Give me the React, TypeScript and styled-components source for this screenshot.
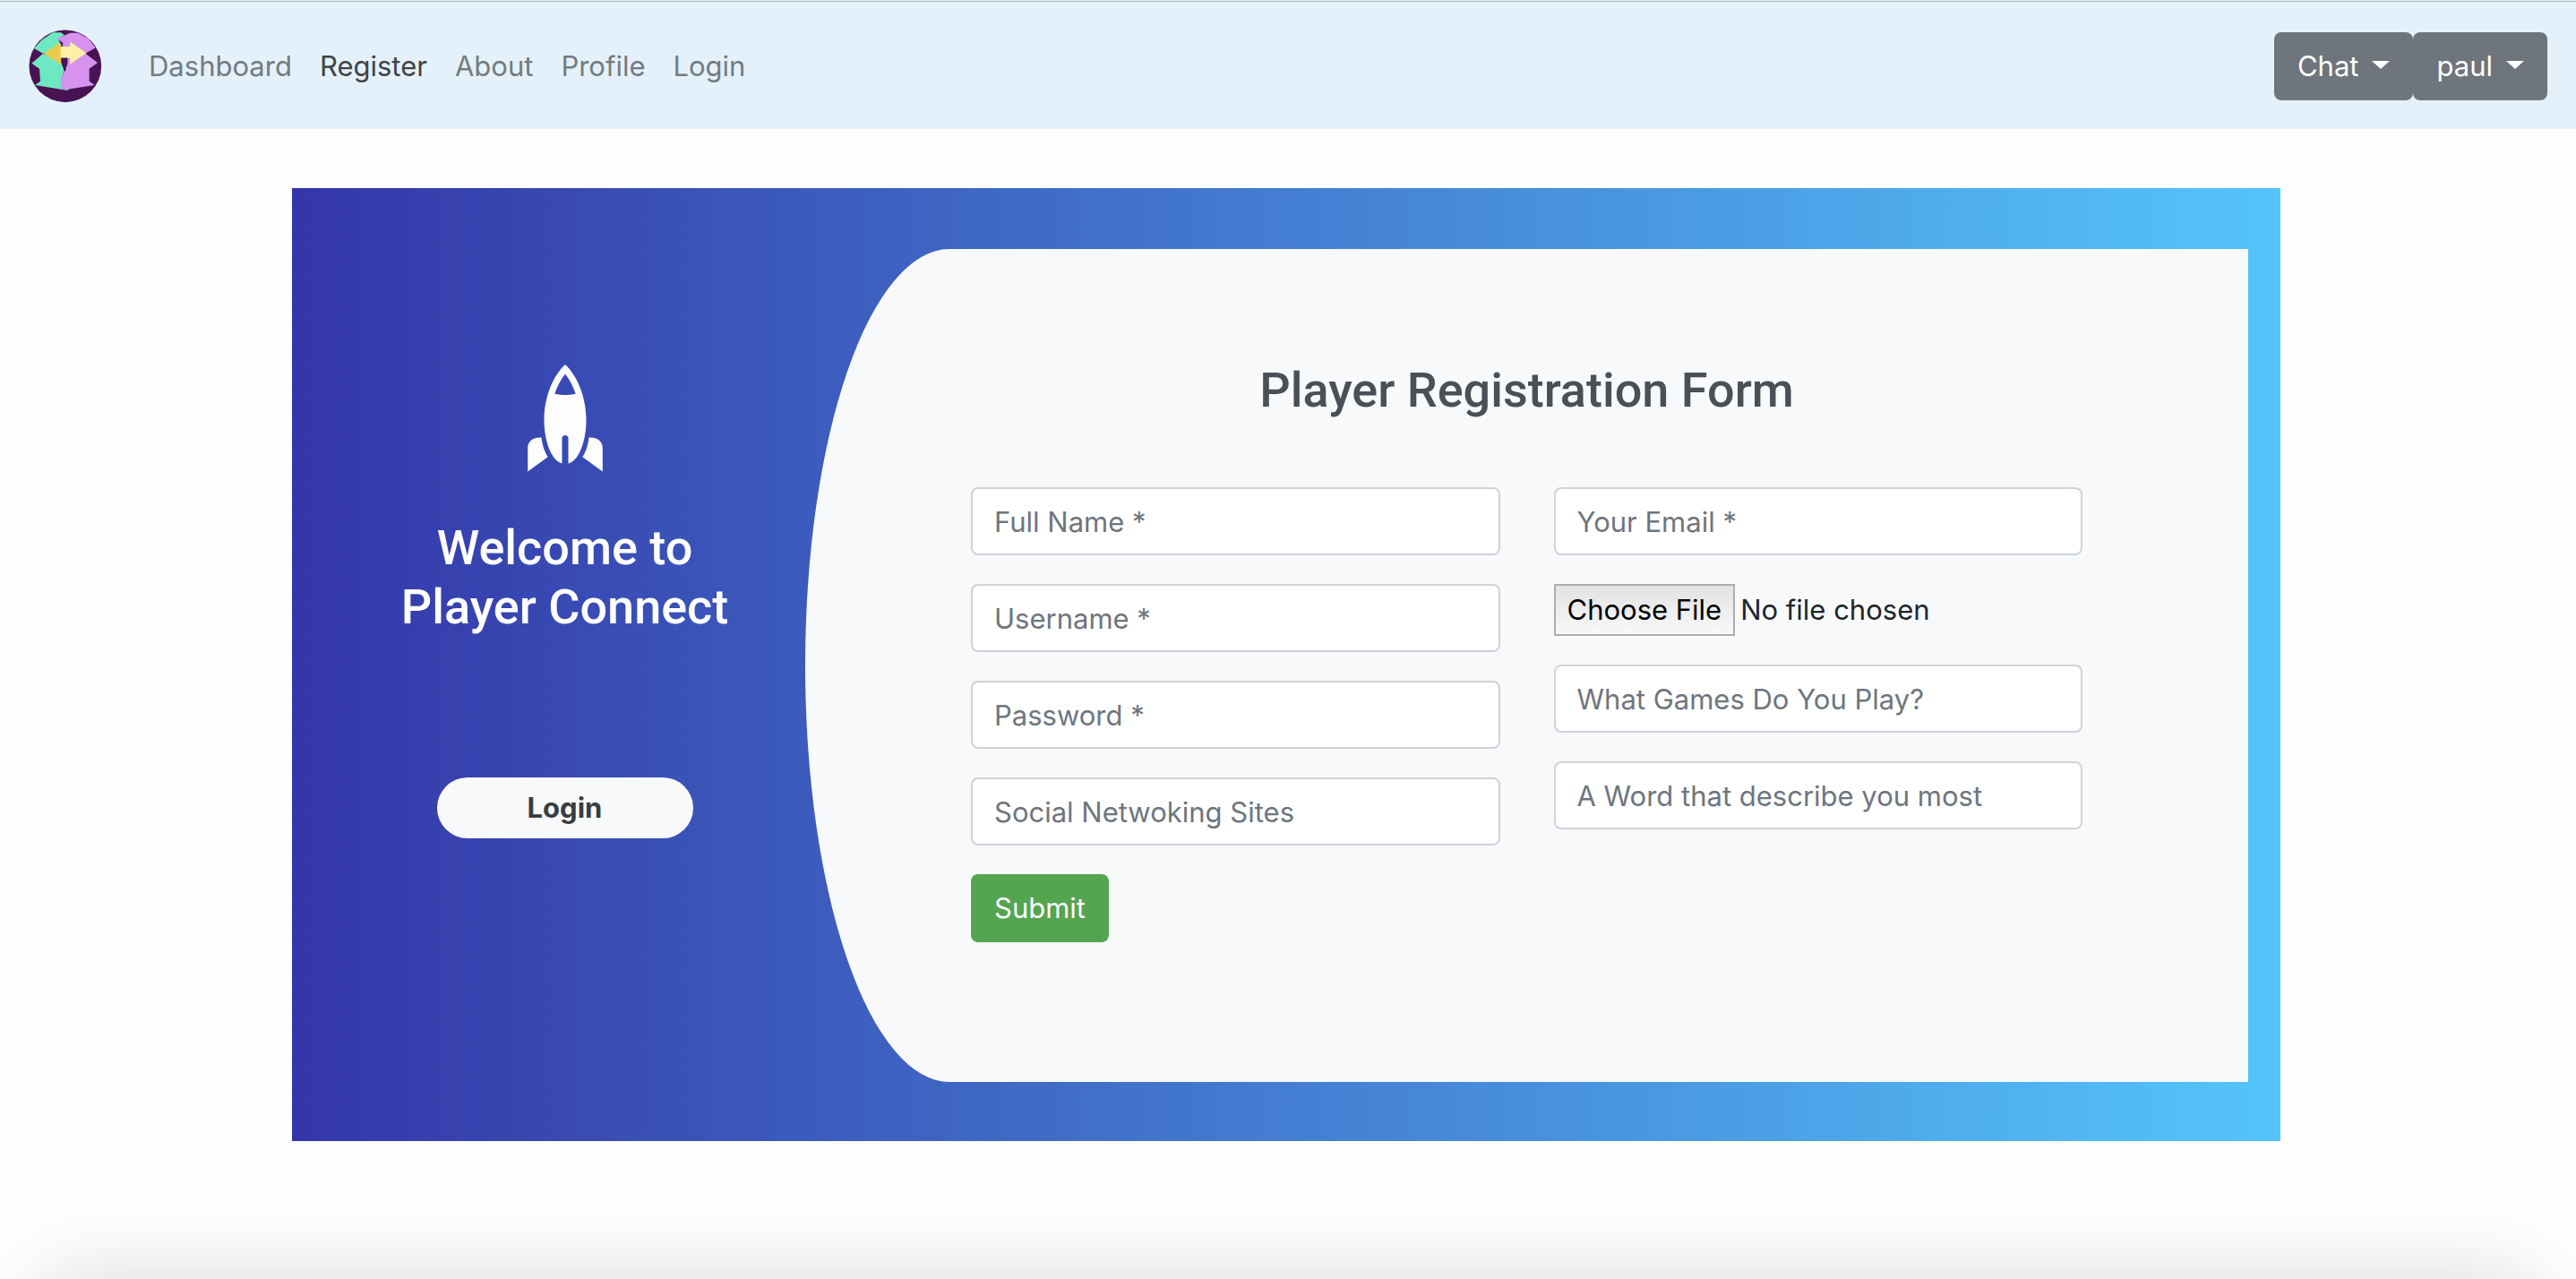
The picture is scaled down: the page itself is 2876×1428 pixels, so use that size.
import React from "react";
import styled, { createGlobalStyle } from "styled-components";

const color = {
  navBg: "#e4f1fb",
  edge: "#acb2b5",
  muted: "#737b81",
  strong: "#404446",
  secondary: "#6e757c",
  panel: "#f8f9fb",
  border: "#cdd3d9",
  placeholder: "#6e757e",
  heading: "#4a5057",
  success: "#55a44f",
};

const GlobalStyle = createGlobalStyle`
  *, *::before, *::after { box-sizing: border-box; }
  body {
    margin: 0;
    background: #fefefe;
    color: #212529;
    font-family: Inter, "Liberation Sans", sans-serif;
    font-size: 31px;
    line-height: 48px;
  }
  button, input { font: inherit; }
`;

const Page = styled.div`
  position: relative;
  display: flex;
  flex-direction: column;
  min-height: 100vh;
  overflow: hidden;
  border-top: 1px solid ${color.navBg};
`;

const Navbar = styled.nav`
  display: flex;
  align-items: center;
  height: 143px;
  padding: 2px 32px 0;
  border-top: 1px solid ${color.edge};
  background: ${color.navBg};
`;

const Brand = styled.a`
  display: flex;
  margin-right: 52px;
`;

const NavList = styled.ul`
  display: flex;
  flex: 1;
  gap: 31px;
  margin: 0;
  padding: 0;
  list-style: none;
`;

const NavLink = styled.a<{ $active?: boolean }>`
  display: block;
  padding: 16px 0;
  color: ${(p) => (p.$active ? color.strong : color.muted)};
  text-decoration: none;
`;

const Button = styled.button<{ $bg: string }>`
  display: inline-flex;
  align-items: center;
  height: 76px;
  padding: 0 26px;
  border: 0;
  border-radius: 8px;
  background: ${(p) => p.$bg};
  color: #fff;
  cursor: pointer;
`;

const Menus = styled.div`
  display: flex;
`;

const Caret = styled.span`
  margin: 0 0 4px 15px;
  border: 10px solid transparent;
  border-top: 9px solid #fff;
  border-bottom: 0;
`;

const Main = styled.main`
  padding: 66px 4px 154px 0;
`;

const Card = styled.section`
  display: grid;
  grid-template-columns: 1fr 3fr;
  max-width: 2220px;
  margin: 0 auto;
  padding: 68px 36px 66px;
  background: linear-gradient(to right, #3436a8, #54c5fb);
`;

const Welcome = styled.div`
  display: flex;
  flex-direction: column;
  align-items: center;
  padding-top: 129px;
`;

const Title = styled.h3<{ $color: string }>`
  margin: 0;
  color: ${(p) => p.$color};
  font-family: Roboto, Inter, sans-serif;
  font-size: 54px;
  font-weight: 500;
  line-height: 66px;
  text-align: center;
`;

const WelcomeTitle = styled(Title)`
  margin: 52px 0 157px;
`;

const LoginButton = styled.button`
  width: 286px;
  height: 68px;
  padding: 0;
  border: 0;
  border-radius: 34px;
  background: ${color.panel};
  color: #383d42;
  font-weight: 700;
  cursor: pointer;
`;

const Panel = styled.form`
  min-height: 930px;
  padding: 125px 185px;
  border-radius: 10% 0 0 10% / 50% 0 0 50%;
  background: ${color.panel};
`;

const Fields = styled.div`
  display: grid;
  grid-template-columns: 1fr 1fr;
  gap: 60px;
  margin-top: 75px;
`;

const Column = styled.div`
  display: flex;
  flex-direction: column;
  align-items: flex-start;
  gap: 32px;
`;

const Label = styled.label`
  display: block;
  width: 100%;
`;

const TextInput = styled.input`
  display: block;
  width: 100%;
  height: 76px;
  padding: 0 24px;
  border: 2px solid ${color.border};
  border-radius: 8px;
  background: #fff;
  color: #495057;
  &::placeholder {
    color: ${color.placeholder};
    opacity: 1;
  }
`;

const FileInput = styled.input`
  display: block;
  width: 100%;
  height: 58px;
  &::file-selector-button {
    height: 58px;
    margin: 0 6px 0 0;
    padding: 0 13px;
    border: 2px solid #adadad;
    border-radius: 0;
    background: linear-gradient(#e2e2e2, #f8f8f8);
    color: #000;
    font: inherit;
  }
`;

const BottomShade = styled.div`
  position: absolute;
  top: 100%;
  left: 50px;
  right: 50px;
  height: 200px;
  box-shadow: 0 0 90px rgba(0, 0, 0, 0.15);
`;

function Logo() {
  return (
    <svg width="82" height="82" viewBox="97 97 246 246" role="img" aria-label="Player Connect">
      <circle cx="219.500" cy="219.500" r="121" fill="#481352" />
      <path d="M115 160L140 132L178 107H205L217 116L195 128L207 150L145 177Z" fill="#6de8c0" />
      <path d="M145 177L205 205L208 210L217 236L205 265V297L118 283L136 270L133 228L107 210Z" fill="#6de8c0" />
      <path d="M192 128L236 108H262L298 128L321 158L287 177L236 155L210 153L212 141Z" fill="#d792ee" />
      <path d="M287 177L328 208L300 228V270L318 283L228 297L205 299V262L219 234L227 210V190Z" fill="#d792ee" />
      <path d="M218 295h12v5h-12z" fill="#6de8c0" />
      <path d="M147 177L200 141L206 153V213L200 211Z" fill="#e8cc50" />
      <path d="M204 154H236V138L290 176L236 213V192H204Z" fill="#fff0a5" />
      <path d="M207 192H227V210L221 226V236H214V228L207 210Z" fill="#481352" />
    </svg>
  );
}

function Rocket() {
  return (
    <svg width="84" height="120" viewBox="0 0 84 120" fill="#fdfdfd" aria-hidden="true">
      <path
        fillRule="evenodd"
        d="M42 0C56 13 65.500 37 65.500 62C65.500 86 57 108 45.500 110.500V82.500a3.500 3.500 0 0 0-7 0V110.500C27 108 18.500 86 18.500 62C18.500 37 28 13 42 0ZM42 10.500C37 17 33 24.500 30.300 32.800Q42 35.200 53.700 32.800C51 24.500 47 17 42 10.500Z"
      />
      <path d="M.2 119.600V93C.2 85 7 80.800 15.500 81.500C16.500 90 18.500 96.500 22.600 103.200Z" />
      <path d="M83.800 119.600V93C83.800 85 77 80.800 68.500 81.500C67.500 90 65.500 96.500 61.400 103.200Z" />
    </svg>
  );
}

function Field({ label, type = "text" }: { label: string; type?: string }) {
  return (
    <Label>
      <TextInput type={type} placeholder={label} aria-label={label} />
    </Label>
  );
}

const links = ["Dashboard", "Register", "About", "Profile", "Login"];

export default function App() {
  return (
    <Page>
      <GlobalStyle />
      <Navbar>
        <Brand href="#">
          <Logo />
        </Brand>
        <NavList>
          {links.map((name) => (
            <li key={name}>
              <NavLink href="#" $active={name === "Register"}>
                {name}
              </NavLink>
            </li>
          ))}
        </NavList>
        <Menus>
          {["Chat", "paul"].map((name) => (
            <Button key={name} type="button" aria-haspopup="menu" $bg={color.secondary}>
              {name}
              <Caret />
            </Button>
          ))}
        </Menus>
      </Navbar>
      <Main>
        <Card>
          <Welcome>
            <Rocket />
            <WelcomeTitle $color="#fff">
              Welcome to
              <br />
              Player Connect
            </WelcomeTitle>
            <LoginButton type="button">Login</LoginButton>
          </Welcome>
          <Panel onSubmit={(e) => e.preventDefault()}>
            <Title $color={color.heading}>Player Registration Form</Title>
            <Fields>
              <Column>
                <Field label="Full Name *" />
                <Field label="Username *" />
                <Field label="Password *" type="password" />
                <Field label="Social Netwoking Sites" />
                <Button type="submit" $bg={color.success}>
                  Submit
                </Button>
              </Column>
              <Column>
                <Field label="Your Email *" type="email" />
                <Label>
                  <FileInput type="file" aria-label="Profile picture" />
                </Label>
                <Field label="What Games Do You Play?" />
                <Field label="A Word that describe you most" />
              </Column>
            </Fields>
          </Panel>
        </Card>
      </Main>
      <BottomShade />
    </Page>
  );
}
